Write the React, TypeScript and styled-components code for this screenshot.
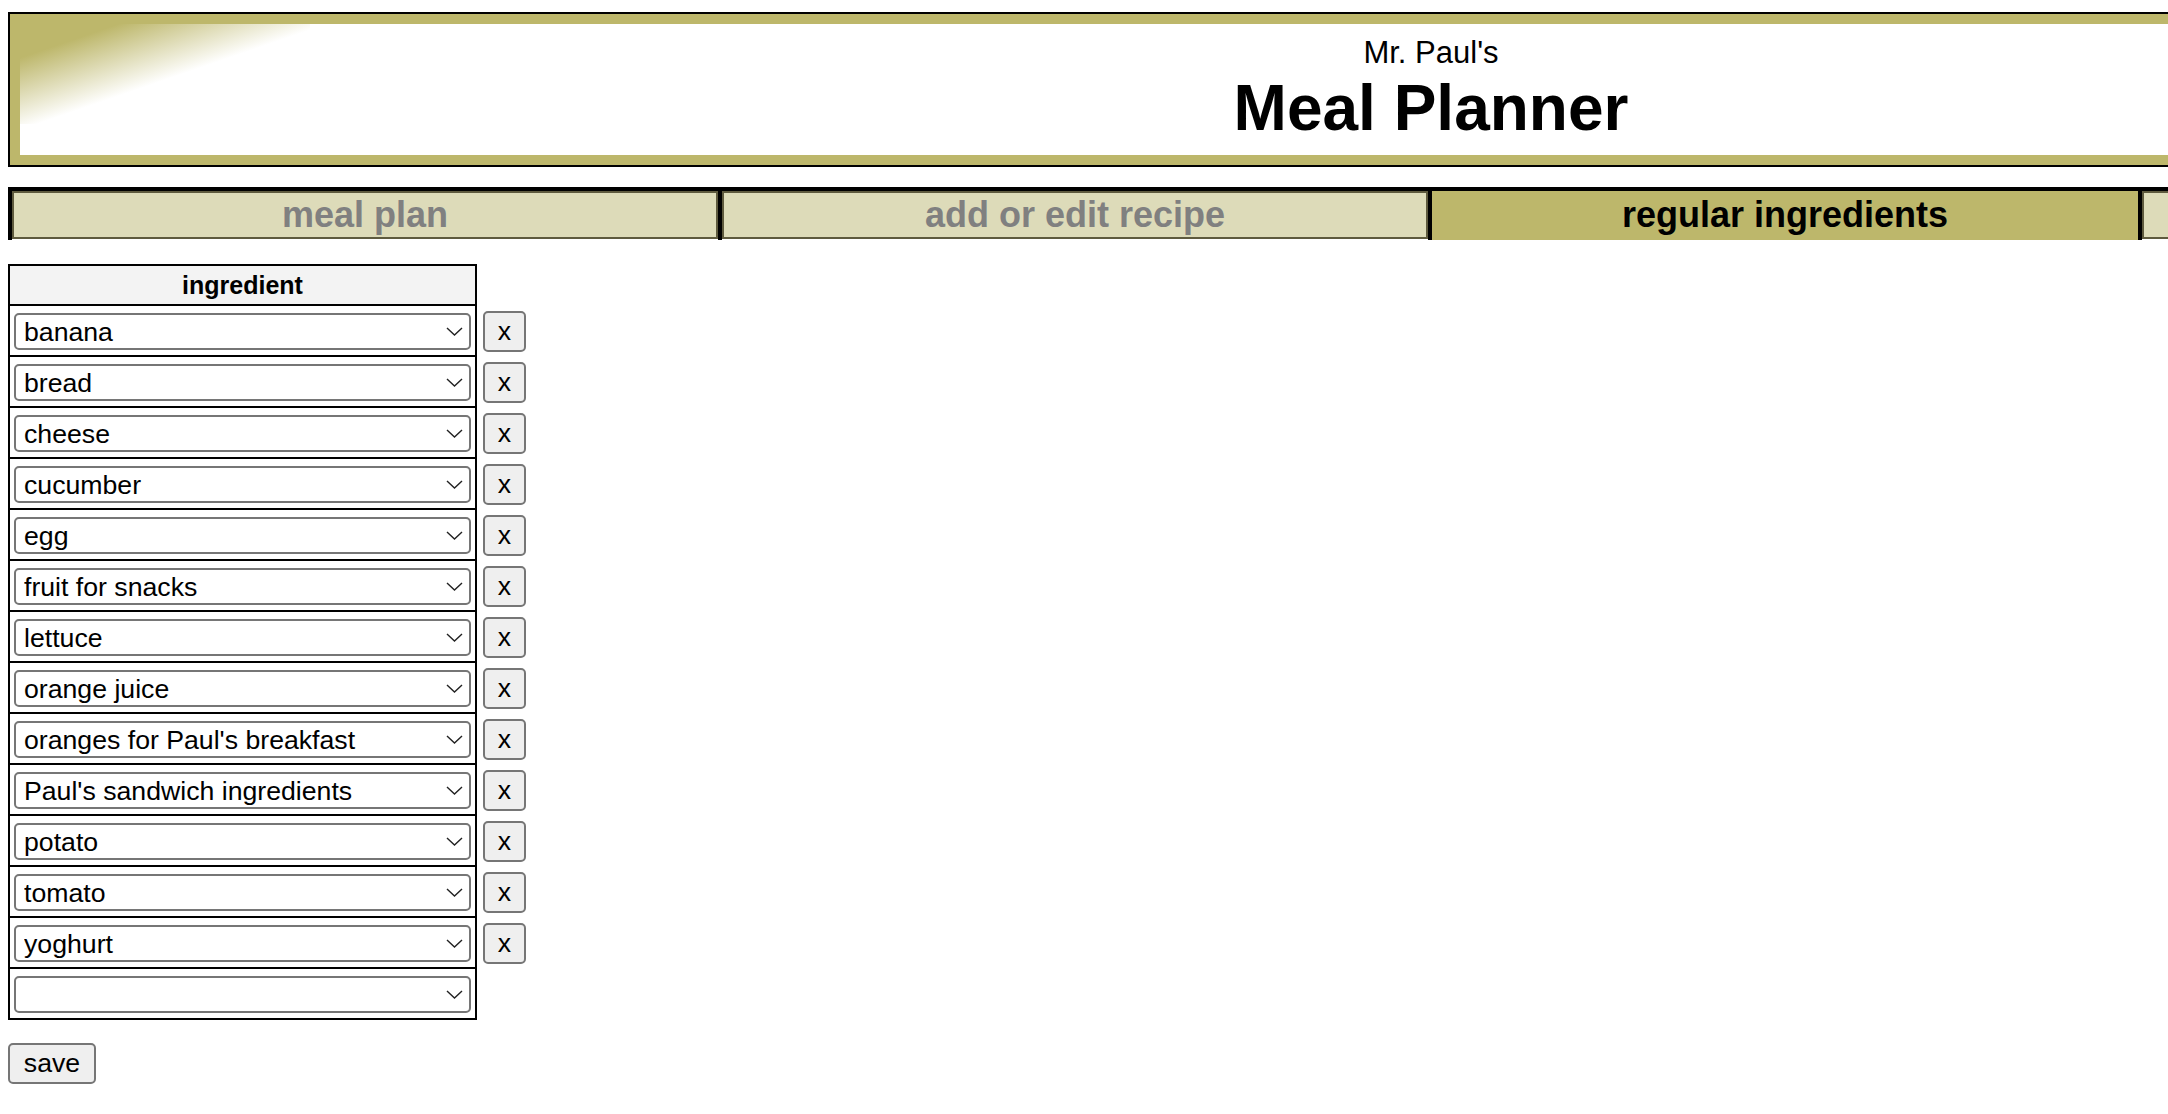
import styled, { createGlobalStyle } from "styled-components";

const KHAKI = "#bdb76b";
const PALE_KHAKI = "#dddbb9";
const DARK_OLIVE = "#5e5a3e";

const GlobalStyle = createGlobalStyle`
  html {
    overflow: hidden;
  }
  body {
    margin: 8px 0 8px 8px;
    background: #fff;
    color: #000;
    font-family: "Liberation Sans", Arial, sans-serif;
  }
`;

const Page = styled.div`
  width: 2846px;
`;

const Banner = styled.header`
  margin-top: 4px;
  border: 2px solid #000;
`;

// the khaki frame with the faded corner in the top left
const BannerInner = styled.div`
  box-sizing: border-box;
  height: 151px;
  padding-top: 11px;
  border: 10px solid ${KHAKI};
  background: linear-gradient(to bottom right, ${KHAKI} 0%, ${KHAKI} 17%, #fff 53%) 0 0 / 290px 100px no-repeat,
    #fff;
  display: flex;
  flex-direction: column;
  align-items: center;
`;

const SubTitle = styled.div`
  font-size: 31px;
  line-height: 36px;
`;

const Title = styled.h1`
  margin: 2px 0 0;
  font-size: 64px;
  line-height: 70px;
  font-weight: bold;
`;

const TabBar = styled.nav`
  margin-top: 20px;
  display: flex;
  border-top: 4px solid #000;
`;

const Tab = styled.div`
  flex: 0 0 710px;
  box-sizing: border-box;
  border-left: 4px solid #000;
`;

const TabLabel = styled.div<{ $active?: boolean }>`
  box-sizing: border-box;
  height: ${(p) => (p.$active ? "49px" : "48px")};
  border: ${(p) => (p.$active ? "none" : `2px solid ${DARK_OLIVE}`)};
  background: ${(p) => (p.$active ? KHAKI : PALE_KHAKI)};
  color: ${(p) => (p.$active ? "#000" : "#808080")};
  font-size: 36px;
  font-weight: bold;
  line-height: ${(p) => (p.$active ? "47px" : "44px")};
  text-align: center;
  cursor: pointer;
`;

const IngredientTable = styled.table`
  margin-top: 24px;
  border-collapse: separate;
  border-spacing: 0;
`;

const HeadCell = styled.th`
  box-sizing: border-box;
  width: 469px;
  height: 41px;
  padding: 0;
  border: 2px solid #000;
  background: #f3f3f3;
  font-size: 25px;
  line-height: 38px;
  font-weight: bold;
`;

const BlankHead = styled.th`
  padding: 0;
`;

const ItemCell = styled.td`
  padding: 7px 4px 5px;
  border: 2px solid #000;
  border-top: none;
`;

const ActionCell = styled.td`
  padding: 0 0 0 6px;
  vertical-align: middle;
`;

const SelectWrap = styled.div`
  position: relative;
  width: 457px;
`;

const Select = styled.select`
  appearance: none;
  box-sizing: border-box;
  width: 100%;
  height: 37px;
  padding: 0 34px 0 8px;
  border: 2px solid #767676;
  border-radius: 5px;
  background: #fff;
  color: #000;
  font-family: "Liberation Sans", Arial, sans-serif;
  font-size: 26.67px;
`;

const Chevron = styled.svg`
  position: absolute;
  right: 8px;
  top: 14px;
  pointer-events: none;
`;

const GreyButton = styled.button`
  box-sizing: border-box;
  height: 41px;
  border: 2px solid #767676;
  border-radius: 5px;
  background: #efefef;
  color: #000;
  font-family: "Liberation Sans", Arial, sans-serif;
  font-size: 26.67px;
  line-height: 1;
  cursor: pointer;
`;

const RemoveButton = styled(GreyButton)`
  width: 43px;
  padding: 0;
`;

const SaveButton = styled(GreyButton)`
  display: block;
  margin-top: 23px;
  width: 88px;
  padding: 0;
`;

const tabs = [
  { id: "plan", label: "meal plan" },
  { id: "recipe", label: "add or edit recipe" },
  { id: "regular", label: "regular ingredients", active: true },
  { id: "more", label: "" },
];

const ingredients = [
  "banana",
  "bread",
  "cheese",
  "cucumber",
  "egg",
  "fruit for snacks",
  "lettuce",
  "orange juice",
  "oranges for Paul's breakfast",
  "Paul's sandwich ingredients",
  "potato",
  "tomato",
  "yoghurt",
];

const IngredientSelect = ({ value }: { value: string }) => (
  <SelectWrap>
    <Select defaultValue={value}>
      <option value=""></option>
      {ingredients.map((name) => (
        <option key={name} value={name}>
          {name}
        </option>
      ))}
    </Select>
    <Chevron width="17" height="9" viewBox="0 0 17 9">
      <polyline points="1,1 8.5,8 16,1" fill="none" stroke="#222" strokeWidth="1.4" />
    </Chevron>
  </SelectWrap>
);

const App = () => {
  return (
    <Page>
      <GlobalStyle />
      <Banner>
        <BannerInner>
          <SubTitle>Mr. Paul's</SubTitle>
          <Title>Meal Planner</Title>
        </BannerInner>
      </Banner>
      <TabBar>
        {tabs.map((tab) => (
          <Tab key={tab.id}>
            <TabLabel $active={tab.active}>{tab.label}</TabLabel>
          </Tab>
        ))}
      </TabBar>
      <IngredientTable>
        <thead>
          <tr>
            <HeadCell>ingredient</HeadCell>
            <BlankHead />
          </tr>
        </thead>
        <tbody>
          {ingredients.map((name) => (
            <tr key={name}>
              <ItemCell>
                <IngredientSelect value={name} />
              </ItemCell>
              <ActionCell>
                <RemoveButton>x</RemoveButton>
              </ActionCell>
            </tr>
          ))}
          <tr>
            <ItemCell>
              <IngredientSelect value="" />
            </ItemCell>
            <ActionCell />
          </tr>
        </tbody>
      </IngredientTable>
      <SaveButton>save</SaveButton>
    </Page>
  );
};

export default App;
